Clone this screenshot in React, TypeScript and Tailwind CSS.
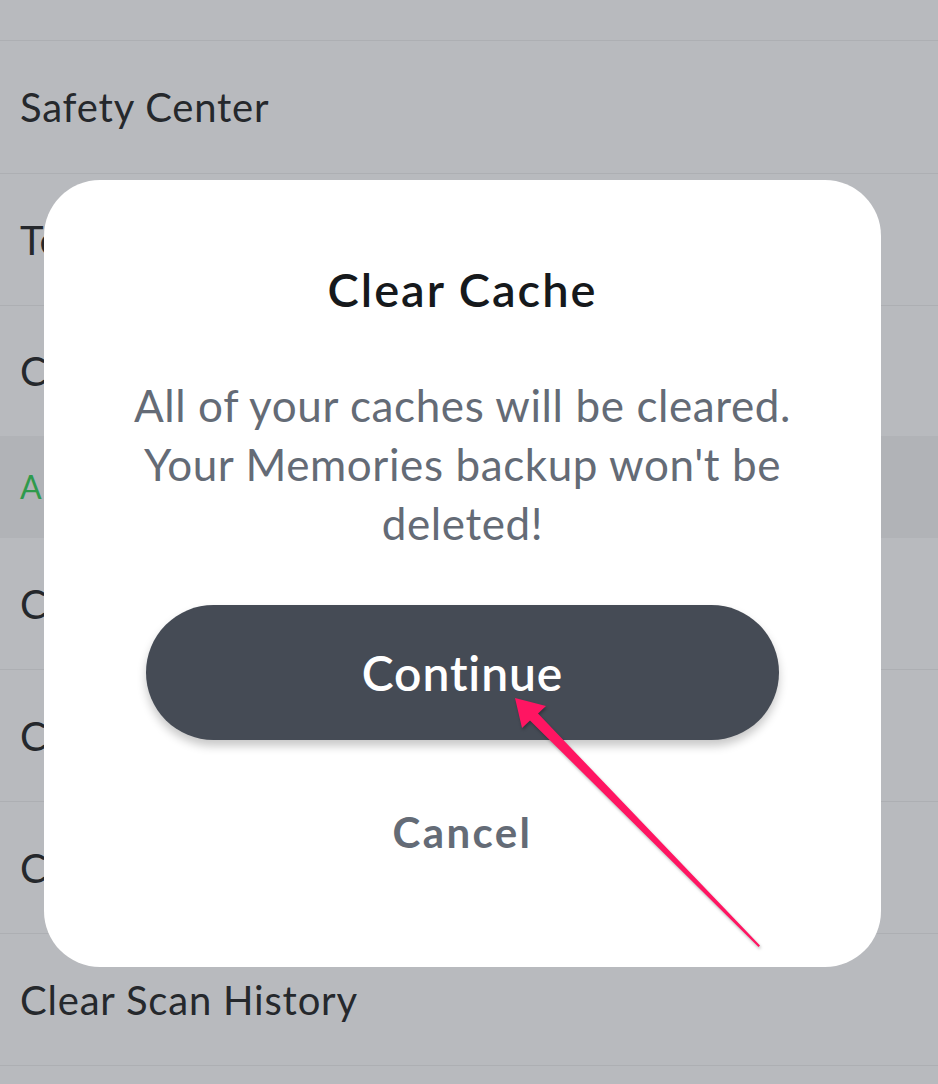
import React from 'react';

const FONT = { fontFamily: 'Lato, "Noto Sans", "Liberation Sans", sans-serif' };

type Row = { label: string; h: string; header?: boolean; divider?: boolean };

const ROWS: Row[] = [
  { label: '', h: 'h-[41px]', divider: true },
  { label: 'Safety Center', h: 'h-[133px]', divider: true },
  { label: 'Terms of Service', h: 'h-[132px]', divider: true },
  { label: 'Cookie Policy', h: 'h-[130px]' },
  { label: 'ACCOUNT ACTIONS', h: 'h-[102px]', header: true },
  { label: 'Clear Cache', h: 'h-[132px]', divider: true },
  { label: 'Clear Conversations', h: 'h-[132px]', divider: true },
  { label: 'Clear Search History', h: 'h-[132px]', divider: true },
  { label: 'Clear Scan History', h: 'h-[132px]', divider: true },
  { label: '', h: 'h-[40px]' },
];

function SettingsList() {
  return (
    <ul className="flex flex-col">
      {ROWS.map((r, i) => (
        <li
          key={i}
          className={`${r.h} flex items-center px-[20px] ${
            r.header ? 'bg-[#b1b3b7]' : ''
          } ${r.divider ? 'border-b border-[#adafb3]' : ''}`}
        >
          {r.header ? (
            <span className="text-[32px] text-[#2f9a4c] tracking-[2.5px]">{r.label}</span>
          ) : (
            <span className="text-[40px] tracking-[0.8px] text-[#25282c]">{r.label}</span>
          )}
        </li>
      ))}
    </ul>
  );
}

function Arrow() {
  return (
    <svg
      className="absolute left-0 top-0 pointer-events-none"
      width={938}
      height={1084}
      viewBox="0 0 938 1084"
      style={{ filter: 'drop-shadow(1px 2px 1.5px rgba(0,0,0,0.3))' }}
    >
      <polygon
        points="515,698 546,706 538,713.5 760,945.5 758.5,947 530,720.5 522,728"
        fill="#ff1562"
      />
    </svg>
  );
}

export default function App() {
  return (
    <div className="relative w-[938px] h-[1084px] overflow-hidden bg-[#b8babe]" style={FONT}>
      <SettingsList />

      <div className="absolute left-[44px] top-[180px] w-[837px] h-[787px] rounded-[56px] bg-white flex flex-col items-center pt-[80px]">
        <h2 className="text-[47px] leading-[58px] font-semibold tracking-[2px] text-[#16191c]">
          Clear Cache
        </h2>
        <p className="mt-[58px] w-[780px] text-center text-[44px] leading-[59px] tracking-[0.6px] text-[#646b76]">
          All of your caches will be cleared.
          <br />
          Your Memories backup won't be
          <br />
          deleted!
        </p>
        <button
          type="button"
          className="mt-[52px] w-[633px] h-[135px] shrink-0 rounded-full bg-[#454b55] text-white text-[48px] font-semibold tracking-[0.9px] shadow-[0_6px_10px_rgba(0,0,0,0.22)]"
        >
          Continue
        </button>
        <button
          type="button"
          className="mt-[67px] text-[42px] leading-[50px] font-bold tracking-[2.4px] text-[#646b76]"
        >
          Cancel
        </button>
      </div>

      <Arrow />
    </div>
  );
}
